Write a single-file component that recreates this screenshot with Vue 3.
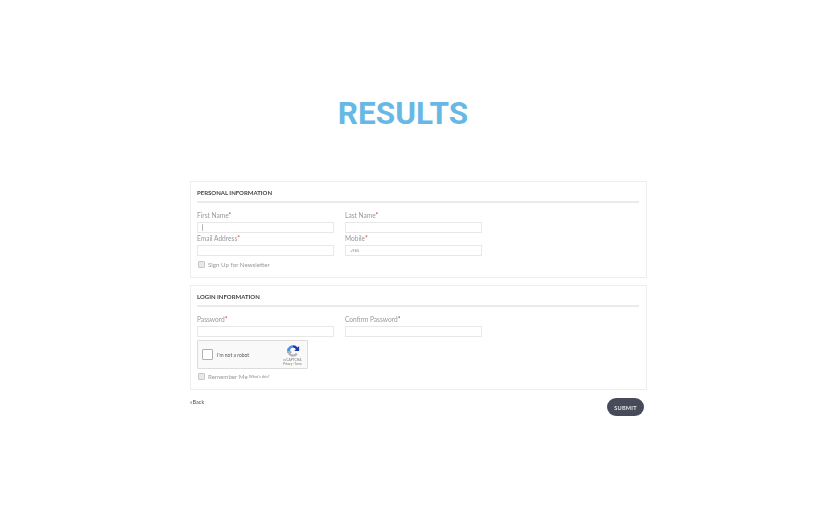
<template>
  <div class="page">
    <h1 class="title">RESULTS</h1>
    <div class="form-wrap">
      <section class="panel personal">
        <h2 class="panel-title">PERSONAL INFORMATION</h2>
        <div class="field-grid">
          <div class="field">
            <label>First Name<em>*</em></label>
            <div class="input"><span class="caret"></span></div>
          </div>
          <div class="field">
            <label>Last Name<em>*</em></label>
            <div class="input"></div>
          </div>
          <div class="field">
            <label>Email Address<em>*</em></label>
            <div class="input"></div>
          </div>
          <div class="field">
            <label>Mobile<em>*</em></label>
            <div class="input code">+965</div>
          </div>
        </div>
        <div class="check-row">
          <span class="check"></span>
          <span>Sign Up for Newsletter</span>
        </div>
      </section>

      <section class="panel login">
        <h2 class="panel-title">LOGIN INFORMATION</h2>
        <div class="field-grid">
          <div class="field">
            <label>Password<em>*</em></label>
            <div class="input"></div>
          </div>
          <div class="field">
            <label>Confirm Password<em>*</em></label>
            <div class="input"></div>
          </div>
        </div>
        <div class="captcha">
          <span class="captcha-box"></span>
          <span class="captcha-text">I'm not a robot</span>
          <div class="captcha-brand">
            <svg width="14" height="14" viewBox="0 0 24 24" fill="none">
              <path d="M12 2a10 10 0 0 1 8 4l2.500-2.500V12H14l3-3a6.500 6.500 0 0 0-5-3z" fill="#1c3aa9" />
              <path d="M12 2A10 10 0 0 0 3 8l-1-1v8h8l-3-3a6 6 0 0 1 5-6z" fill="#4a90e2" />
              <path d="M2 12a10 10 0 0 0 10 10 10 10 0 0 0 8-4l-3-3a6 6 0 0 1-5 3 6 6 0 0 1-5-3l3-3z" fill="#b4b4b4" />
            </svg>
            <span class="brand-name">reCAPTCHA</span>
            <span class="brand-links">Privacy - Terms</span>
          </div>
        </div>
        <div class="check-row remember">
          <span class="check"></span>
          <span>Remember Me</span>
          <small>What's this?</small>
        </div>
      </section>

      <div class="actions">
        <a class="back">«Back</a>
        <button class="submit">SUBMIT</button>
      </div>
    </div>
  </div>
</template>

<script setup>
</script>

<style scoped>
.page {
  min-height: 525px;
  background: #fff;
  font-family: Lato, "Liberation Sans", sans-serif;
  overflow: hidden;
}

.title {
  margin: 0;
  padding: 94px 19px 0 0;
  height: 87px;
  text-align: center;
  color: #68b8e6;
  font-family: Roboto, "Liberation Sans", sans-serif;
  font-size: 31.5px;
  font-weight: 700;
  line-height: 39px;
}

.form-wrap {
  width: 457px;
  margin-left: 190px;
  filter: blur(0.6px);
}

.panel {
  border: 1px solid #eee;
  padding: 0 7px 0 6px;
  margin-bottom: 7px;
}

.personal {
  height: 97px;
  box-sizing: border-box;
}

.login {
  height: 105px;
  box-sizing: border-box;
  margin-bottom: 0;
}

.panel-title {
  margin: 0 0 7px;
  height: 13px;
  padding-top: 6px;
  border-bottom: 2px solid #ebebeb;
  color: #444;
  font-size: 6px;
  font-weight: 700;
  line-height: 9px;
}

.field-grid {
  display: grid;
  grid-template-columns: 137px 137px;
  column-gap: 11px;
}

.field label {
  display: block;
  height: 11px;
  margin-bottom: 1px;
  color: #999;
  font-size: 6.6px;
  line-height: 11px;
}

.field em {
  color: #e2483d;
  font-style: normal;
}

.input {
  display: flex;
  align-items: center;
  height: 11px;
  padding-left: 4px;
  box-sizing: border-box;
  border: 1px solid #e8e8e8;
  color: #888;
  font-size: 4px;
}

.caret {
  width: 1px;
  height: 7px;
  background: #bbb;
}

.check-row {
  display: flex;
  align-items: center;
  gap: 3px;
  margin: 4px 0 0 1px;
  height: 9px;
  color: #999;
  font-size: 6.2px;
  line-height: 9px;
}

.check {
  width: 5px;
  height: 5px;
  border: 1px solid #c8c8c8;
  background: #e8e8e8;
  border-radius: 1px;
}

.remember {
  margin-top: 3px;
}

.remember small {
  margin-left: -2px;
  font-size: 3.9px;
  color: #888;
}

.captcha {
  display: flex;
  align-items: center;
  width: 111px;
  height: 29px;
  margin-top: 3px;
  box-sizing: border-box;
  padding: 0 4px;
  border: 1px solid #dcdcdc;
  border-radius: 1px;
  background: #f9f9f9;
}

.captcha-box {
  flex: none;
  width: 11px;
  height: 11px;
  box-sizing: border-box;
  border: 1px solid #b0b0b0;
  background: #fff;
  border-radius: 1px;
}

.captcha-text {
  margin-left: 4px;
  flex: 1;
  color: #555;
  font-size: 5px;
}

.captcha-brand {
  display: flex;
  flex-direction: column;
  align-items: center;
  width: 21px;
  color: #777;
}

.brand-name {
  font-size: 3.3px;
  line-height: 4px;
}

.brand-links {
  font-size: 2.8px;
  line-height: 4px;
  white-space: nowrap;
}

.actions {
  display: flex;
  justify-content: space-between;
  align-items: flex-start;
  padding: 8px 3px 0 0;
}

.back {
  color: #555;
  font-size: 5.6px;
  line-height: 7px;
}

.submit {
  width: 37px;
  height: 18px;
  padding: 0;
  border: 0;
  border-radius: 9px;
  background: #474a59;
  color: #e6e6e6;
  font-family: Lato, "Liberation Sans", sans-serif;
  font-size: 5.6px;
  font-weight: 700;
  letter-spacing: 0.2px;
}
</style>
